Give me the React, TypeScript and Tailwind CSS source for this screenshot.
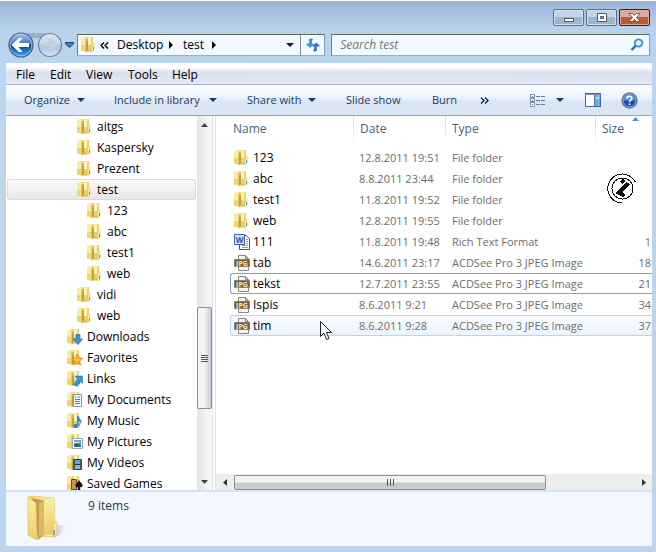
import React from "react";

type Badge = "down" | "star" | "link" | "doc" | "music" | "picture" | "video" | "games";

function FolderIcon({ badge }: { badge?: Badge }) {
  return (
    <svg width="16" height="16" viewBox="0 0 16 16" className="shrink-0" aria-hidden="true">
      <path d="M0 1L5 0H12V14H5L0 14Z" fill="#f3dc80" />
      <path d="M0 1H4.500V14.500L0 13.500Z" fill="#f9eb9f" />
      <path d="M0 8H4.500V14.500L0 13.500Z" fill="#f0d46c" />
      <path d="M4.500 2H7V13L5 15.500L4.500 15Z" fill="#d5b14e" />
      <path d="M5.500 5H6.500V13.500L5.500 14.500Z" fill="#b58a35" />
      <path d="M7 .5H10V13H7Z" fill="#fdf4bb" />
      <path d="M10 .5H12V14H10Z" fill="#efd26b" />
      <path d="M7 8H12V13H7Z" fill="#efcf63" />
      <path d="M6 13H12V14.500H6Z" fill="#d9b64c" />
      <path d="M11 5.500L13 6.500V13L11.500 14.500L10.500 13.500Z" fill="#f8e9a0" stroke="#e0c15c" strokeWidth=".5" />
      <path d="M12 10H13V13H12Z" fill="#3f9be3" />
      {badge === "down" && <path d="M9 5.500H13V10H15.500L11 15.500L6.500 10H9Z" fill="#2f95e8" stroke="#1c65b8" strokeWidth=".6" />}
      {badge === "star" && <path d="M10 4L11.500 8L15.500 8.500L12.500 11L13.500 15L10 12.500L6.500 15L7.500 11L5 8.500L8.600 8Z" fill="#fdc036" stroke="#e07c18" strokeWidth=".8" />}
      {badge === "link" && <path d="M8 5H15.500V12.500L13 10.500L10 15.500L6.500 13.500L10.500 8.500Z" fill="#2d96e4" stroke="#1a66b0" strokeWidth=".5" />}
      {badge === "doc" && (
        <g><path d="M6.500 2.500H14.500V14.500H6.500Z" fill="#f4f9fd" stroke="#8098ae" /><path d="M8 5H9.500M8 7.500H13M8 9.500H13M8 11.500H13M11 5H13" stroke="#3f82bd" /></g>
      )}
      {badge === "music" && (
        <g fill="#2b8cdc"><ellipse cx="8.700" cy="13" rx="2.600" ry="2.200" /><path d="M10 3H12C12 6 15.500 6.500 14 11.500C13.500 9 12.500 8.500 11.500 8.500V13H10Z" /></g>
      )}
      {badge === "picture" && (
        <g><path d="M5.500 4.500H15.500V14.500H5.500Z" fill="#fff" stroke="#9aa8b8" /><path d="M7 6H14V13H7Z" fill="#58aee6" /><path d="M7 10L10 9L14 11V13H7Z" fill="#3b6870" /><path d="M7 8H12V9H7Z" fill="#e9f5fb" /></g>
      )}
      {badge === "video" && (
        <g><path d="M6 4H15V15H6Z" fill="#27313f" /><path d="M8 5H13V9H8Z" fill="#58a5dd" /><path d="M8 10H13V14H8Z" fill="#7fb5de" /><path d="M7 4.500V15M14 4.500V15" stroke="#dce5ee" strokeWidth=".8" strokeDasharray="1 1" /></g>
      )}
      {badge === "games" && (
        <g><path d="M4.500 3.500H9.500V13.500H4.500Z" fill="#c9965a" stroke="#6f4b25" /><path d="M12 3.500C12.500 6 16 7.500 15.500 10C15 11.500 13.500 11.500 12.700 11L13.500 14H10.500L11.300 11C10 12 8.500 11 8.500 9.500C8.500 7.500 11.500 6 12 3.500Z" fill="#14120f" /></g>
      )}
    </svg>
  );
}

function LargeFolder() {
  return (
    <svg width="42" height="48" viewBox="0 0 42 48" aria-hidden="true">
      <defs>
        <linearGradient id="bf" x1="0" y1="0" x2="1" y2="0"><stop offset="0" stopColor="#f0d36c" /><stop offset="1" stopColor="#fdf0ae" /></linearGradient>
        <linearGradient id="ff" x1="0" y1="0" x2="0" y2="1"><stop offset="0" stopColor="#fbeea8" /><stop offset="1" stopColor="#eecb62" /></linearGradient>
        <linearGradient id="sh" x1="0" y1="0" x2="1" y2="0"><stop offset="0" stopColor="#aeb7c4" /><stop offset="1" stopColor="#f6f8fe" /></linearGradient>
      </defs>
      <path d="M24 42L32 30L41 31L38 37L30 42Z" fill="url(#sh)" />
      <path d="M2 2L6 1L28 3L29 26L31 30L29 42L13 41Z" fill="url(#bf)" stroke="#dfbe58" strokeWidth=".6" />
      <path d="M6 3L19 6V39L12 45Z" fill="#c39b4f" />
      <path d="M13 8L19 6V39L13 42Z" fill="#dcb966" />
      <path d="M18 5L28 3V39L18 40Z" fill="url(#ff)" />
      <path d="M2 2L10 8L11 45L2 40Z" fill="url(#ff)" stroke="#dfba4e" strokeWidth=".6" />
      <path d="M27 28L31 27V39L28 42L26 39Z" fill="#f8e69a" stroke="#ddbd57" strokeWidth=".7" />
      <path d="M28 35V40" stroke="#4b9ee1" strokeWidth="1.600" />
    </svg>
  );
}

function WordIcon() {
  return (
    <svg width="16" height="16" viewBox="0 0 16 16" className="shrink-0" aria-hidden="true">
      <path d="M5.500 1.500H12L15.500 4.500V15.500H5.500Z" fill="#fdfefe" stroke="#36578f" />
      <path d="M12 5.500H14M12 7.500H14M12 9.500H14M8 11.500H14M8 13.500H14" stroke="#7fa0d2" />
      <path d="M.5 .5H10.500V10.500H.5Z" fill="#dbe7f8" stroke="#3561ad" />
      <text x="5.500" y="8.500" textAnchor="middle" fontSize="8" fontWeight="700" fill="#2450a0">W</text>
    </svg>
  );
}

function JpegIcon() {
  return (
    <svg width="16" height="16" viewBox="0 0 16 16" className="shrink-0" aria-hidden="true">
      <path d="M4.500 .5H11.500L14.500 3.500V15.500H4.500Z" fill="#f4f4f4" stroke="#8a8789" />
      <path d="M11.500 .5V3.500H14.500" fill="none" stroke="#8a8789" />
      <path d="M.5 4.500H15.500V11.500H.5Z" fill="#77602c" stroke="#8c8175" />
      <text x="8" y="10.500" textAnchor="middle" fontSize="7" fontWeight="700" fill="#f4e8c2">JPG</text>
    </svg>
  );
}

function Caret({ className = "" }: { className?: string }) {
  return (
    <svg width="8" height="4" viewBox="0 0 8 4" className={"shrink-0 " + className} aria-hidden="true">
      <path d="M0 0H8L4 4Z" fill="currentColor" />
    </svg>
  );
}

function Crumb() {
  return (
    <svg width="4" height="8" viewBox="0 0 4 8" className="shrink-0" aria-hidden="true"><path d="M0 0L4 4L0 8Z" fill="#000" /></svg>
  );
}

function BackForward() {
  return (
    <div className="flex items-center">
      <button aria-label="Back" className="h-[26px] w-7">
        <svg width="28" height="26" viewBox="0 0 28 26">
          <defs><linearGradient id="bk" x1="0" y1="0" x2="0" y2="1"><stop offset="0" stopColor="#a9c9ee" /><stop offset=".45" stopColor="#4379c3" /><stop offset=".5" stopColor="#0c3b91" /><stop offset="1" stopColor="#3fb0ee" /></linearGradient></defs>
          <path d="M14 1H28V6H20Z" fill="#9aafca" />
          <circle cx="14" cy="13" r="12" fill="url(#bk)" stroke="#49648f" strokeWidth="1.200" />
          <circle cx="14" cy="13" r="10.800" fill="none" stroke="#a8c7ea" strokeWidth=".8" />
          <path d="M4.500 13L12 6H15.500L11.500 11H22V15H11.500L15.500 20H12Z" fill="#fff" />
        </svg>
      </button>
      <button aria-label="Forward" className="h-[26px] w-7">
        <svg width="28" height="26" viewBox="0 0 28 26">
          <defs><linearGradient id="fw" x1="0" y1="0" x2="0" y2="1"><stop offset="0" stopColor="#dbe4f0" /><stop offset=".48" stopColor="#c9d6e7" /><stop offset=".5" stopColor="#acc0d9" /><stop offset="1" stopColor="#d4e3f3" /></linearGradient></defs>
          <path d="M0 1H12L8 6H0Z" fill="#9aafca" />
          <circle cx="15" cy="13" r="11.500" fill="url(#fw)" stroke="#71839f" strokeWidth="1.200" />
          <path d="M8 11.500H16L13 7.500H16L22.500 13L16 18.500H13L16 14.500H8Z" fill="#c5d2e2" stroke="#b3c3d8" strokeWidth=".5" />
        </svg>
      </button>
      <button aria-label="Recent pages" className="ml-[2px] flex h-6 w-3 items-center">
        <svg width="9" height="6" viewBox="0 0 9 6"><path d="M.5 .5H8.500V2L4.500 5.500L.5 2Z" fill="#3c85c2" stroke="#1b426f" /></svg>
      </button>
    </div>
  );
}

const tree: { name: string; level: 0 | 1 | 2; badge?: Badge; selected?: boolean }[] = [
  { name: "aitgs", level: 1 },
  { name: "Kaspersky", level: 1 },
  { name: "Prezent", level: 1 },
  { name: "test", level: 1, selected: true },
  { name: "123", level: 2 },
  { name: "abc", level: 2 },
  { name: "test1", level: 2 },
  { name: "web", level: 2 },
  { name: "vidi", level: 1 },
  { name: "web", level: 1 },
  { name: "Downloads", level: 0, badge: "down" },
  { name: "Favorites", level: 0, badge: "star" },
  { name: "Links", level: 0, badge: "link" },
  { name: "My Documents", level: 0, badge: "doc" },
  { name: "My Music", level: 0, badge: "music" },
  { name: "My Pictures", level: 0, badge: "picture" },
  { name: "My Videos", level: 0, badge: "video" },
  { name: "Saved Games", level: 0, badge: "games" },
];

const indent = { 0: "pl-[59px]", 1: "pl-[69px]", 2: "pl-[79px]" };

type FileRow = { name: string; date: string; kind: "folder" | "word" | "jpeg"; size?: string; state?: "focus" | "hover" };

const files: FileRow[] = [
  { name: "123", date: "12.8.2011 19:51", kind: "folder" },
  { name: "abc", date: "8.8.2011 23:44", kind: "folder" },
  { name: "test1", date: "11.8.2011 19:52", kind: "folder" },
  { name: "web", date: "12.8.2011 19:55", kind: "folder" },
  { name: "111", date: "11.8.2011 19:48", kind: "word", size: "1" },
  { name: "tab", date: "14.6.2011 23:17", kind: "jpeg", size: "18" },
  { name: "tekst", date: "12.7.2011 23:55", kind: "jpeg", size: "21", state: "focus" },
  { name: "Ispis", date: "8.6.2011 9:21", kind: "jpeg", size: "34" },
  { name: "tim", date: "8.6.2011 9:28", kind: "jpeg", size: "37", state: "hover" },
];

const typeLabel = { folder: "File folder", word: "Rich Text Format", jpeg: "ACDSee Pro 3 JPEG Image" };

function TitleBar() {
  const frame = "flex h-[17px] w-[31px] items-center justify-center rounded-[2px] border";
  return (
    <div className="flex h-8 shrink-0 justify-end gap-[2px] pt-2 pr-[6px]">
      <button aria-label="Minimize" className={frame + " border-[#5b6f8a] bg-linear-to-b from-[#c3d4e8] from-50% to-[#9fb4cf] to-50% shadow-[inset_0_0_0_1px_#d3e0ef]"}>
        <svg width="12" height="11" viewBox="0 0 12 11"><path d="M1.500 6.500H10.500V9.500H1.500Z" fill="#fff" stroke="#535766" /></svg>
      </button>
      <button aria-label="Maximize" className={frame + " border-[#5b6f8a] bg-linear-to-b from-[#c3d4e8] from-50% to-[#9fb4cf] to-50% shadow-[inset_0_0_0_1px_#d3e0ef]"}>
        <svg width="12" height="11" viewBox="0 0 12 11"><path d="M1.500 1.500H10.500V9.500H1.500Z" fill="#fff" stroke="#535766" /><path d="M4.500 4.500H7.500V6.500H4.500Z" fill="#9fb4cf" stroke="#535766" /></svg>
      </button>
      <button aria-label="Close" className={frame + " border-[#4b1a22] bg-linear-to-b from-[#dda79b] from-50% to-[#b95a34] to-50% shadow-[inset_0_0_0_1px_#dfa890]"}>
        <svg width="13" height="11" viewBox="0 0 13 11"><path d="M1 1.500H4.500L6.500 3.500L8.500 1.500H12L8.500 5.500L12 9.500H8.500L6.500 7.500L4.500 9.500H1L4.500 5.500Z" fill="#fff" stroke="#555060" strokeWidth=".9" /></svg>
      </button>
    </div>
  );
}

function AddressRow() {
  const box = "flex h-[22px] items-center border border-t-[#5e6c5e] border-r-[#8d9aa8] border-b-[#9eaebf] border-l-[#707f8c] bg-[#f1f8fe]";
  return (
    <div className="flex h-[30px] shrink-0 items-start pt-[1px] pr-[6px] pl-[7px]">
      <div className="-mt-[2px] w-[70px] shrink-0"><BackForward /></div>
      <nav aria-label="Address" className={box + " flex-[248_1_0]"}>
        <span className="ml-[3px] flex"><FolderIcon /></span>
        <button aria-label="Previous locations" className="ml-[3px] w-[9px]">
          <svg width="9" height="7" viewBox="0 0 9 7" className="block"><path d="M4 .5L1 3.500L4 6.500M8 .5L5 3.500L8 6.500" fill="none" stroke="#000" strokeWidth="1.400" /></svg>
        </button>
        <a href="#desktop" className="w-[60px] pl-2 whitespace-nowrap">Desktop</a>
        <Crumb />
        <a href="#test" className="w-[39px] pl-[10px]">test</a>
        <Crumb />
        <button aria-label="Address history" className="ml-auto flex h-full w-5 items-center justify-center text-[#10104a]"><Caret /></button>
        <button aria-label="Refresh" className="flex h-full w-6 items-center justify-center border-l border-[#7d8994]">
          <svg width="14" height="14" viewBox="0 0 14 14"><path d="M6.500 1H4.500C3 1 3.500 2 3.500 6H.5L4 9.500L7.500 6H5.500V3Z" fill="#3b99dc" stroke="#276eb5" strokeWidth=".6" /><path d="M7.500 13H9.500C11 13 10.500 12 10.500 8H13.500L10.500 5L6.500 8H8.500V11Z" fill="#3475c4" stroke="#26569b" strokeWidth=".6" /></svg>
        </button>
      </nav>
      <label className={box + " ml-[6px] flex-[319_1_0]"}>
        <input type="search" aria-label="Search test" placeholder="Search test" className="min-w-0 flex-1 bg-transparent pl-2 italic outline-none placeholder:text-[#70777d]" />
        <svg width="14" height="14" viewBox="0 0 14 14" className="mr-[5px]" aria-hidden="true"><circle cx="8.500" cy="5" r="3.700" fill="#e5f3fd" stroke="#3a8cce" strokeWidth="1.800" /><path d="M5.500 8L1.500 12" stroke="#2d66ac" strokeWidth="2.400" /></svg>
      </label>
    </div>
  );
}

function Commands() {
  return (
    <div className="flex h-[31px] shrink-0 items-center border-b border-[#93a4c8] bg-linear-to-b from-[#fafdff] from-10% via-[#e9f1fb] via-45% to-[#dbe6f5] to-55% pl-[18px] text-[11px] text-[#1e395b]">
      <button className="flex w-[90px] items-center whitespace-nowrap"><span className="w-[53px] text-left">Organize</span><Caret /></button>
      <button className="flex w-[133px] items-center whitespace-nowrap"><span className="w-[95px] text-left">Include in library</span><Caret /></button>
      <button className="flex w-[99px] items-center whitespace-nowrap"><span className="w-[61px] text-left">Share with</span><Caret /></button>
      <button className="w-[86px] text-left whitespace-nowrap">Slide show</button>
      <button className="w-12 text-left">Burn</button>
      <button aria-label="More commands">
        <svg width="9" height="7" viewBox="0 0 9 7"><path d="M1 .5L4 3.500L1 6.500M5 .5L8 3.500L5 6.500" fill="none" stroke="#14284a" strokeWidth="1.400" /></svg>
      </button>
      <div className="ml-auto flex items-center pr-[14px]">
        <button aria-label="Change view" className="w-[26px]">
          <svg width="16" height="13" viewBox="0 0 16 13" shapeRendering="crispEdges"><path d="M.5 .5H4.500V3.500H.5ZM.5 4.500H4.500V7.500H.5ZM.5 8.500H4.500V12.500H.5Z" fill="#fff" stroke="#8492ad" /><path d="M2 2H3V3H2ZM2 10H3V11H2Z" fill="#4b77ad" /><path d="M2 6H3V7H2Z" fill="#c14c32" /><path d="M6 2.500H10M11 2.500H15M6 6.500H10M11 6.500H15M6 10.500H10M11 10.500H15" stroke="#6c7a92" /></svg>
        </button>
        <button aria-label="More views" className="flex h-5 w-[29px] items-center"><Caret /></button>
        <button aria-label="Show the preview pane" className="w-9">
          <svg width="16" height="14" viewBox="0 0 16 14" shapeRendering="crispEdges"><path d="M.5 .5H15.500V13.500H.5Z" fill="#fff" stroke="#4b6587" /><path d="M0 1.500H16" stroke="#7893b7" /><path d="M10 2H15V13H10Z" fill="#62b4df" /><path d="M9.500 2V13" stroke="#567ba2" /><path d="M11 4H14V6H11Z" fill="#bae3f5" /></svg>
        </button>
        <button aria-label="Help">
          <svg width="17" height="17" viewBox="0 0 17 17" className="block"><circle cx="8.500" cy="8.500" r="7.600" fill="#1d4cae" stroke="#737f93" strokeWidth="1.300" /><path d="M2.500 8.500A6 6 0 0 1 14.500 8.500Z" fill="#4d8bdb" /><circle cx="8.500" cy="8.500" r="6.300" fill="none" stroke="#afc9ed" strokeWidth=".7" /><path d="M6 6.800C6 3.500 11.200 3.700 10.800 6.500C10.500 8 8.500 8 8.500 10M8.500 11.500V13" fill="none" stroke="#fff" strokeWidth="1.700" /></svg>
        </button>
      </div>
    </div>
  );
}

function Sidebar() {
  return (
    <aside className="flex w-[206px] shrink-0">
      <ul className="min-w-0 flex-1 overflow-hidden pl-[1px]">
        {tree.map((item, i) => (
          <li key={i}>
            <a href="#folder" className={"mr-[1px] flex h-[21px] items-center gap-1 rounded-[3px] border whitespace-nowrap " + indent[item.level] + (item.selected ? " border-[#d9d9d9] bg-linear-to-b from-[#fafbfb] to-[#e6e6e6]" : " border-transparent")}>
              <FolderIcon badge={item.badge} />
              {item.name}
            </a>
          </li>
        ))}
      </ul>
      <div className="flex w-[15px] flex-col items-center bg-linear-to-r from-[#e5e5e7] via-[#f0f0f0] to-[#fafafa]">
        <button aria-label="Scroll up" className="flex h-[17px] w-full items-center justify-center"><svg width="7" height="4" viewBox="0 0 7 4"><path d="M0 4L3.500 0L7 4Z" fill="#3c4148" /></svg></button>
        <div className="flex-[175_1_0]" />
        <div className="flex w-full flex-[101_1_0] flex-col items-center justify-center gap-[1px] rounded-[2px] border border-[#8c8f94] bg-linear-to-r from-[#f5f5f5] from-45% to-[#c9ccd1]">
          {[0, 1, 2, 3].map((n) => <span key={n} className="h-[1px] w-[7px] bg-[#55585d]" />)}
        </div>
        <div className="flex-[64_1_0]" />
        <button aria-label="Scroll down" className="flex h-[17px] w-full items-center justify-center"><svg width="7" height="4" viewBox="0 0 7 4"><path d="M0 0L3.500 4L7 0Z" fill="#3c4148" /></svg></button>
      </div>
    </aside>
  );
}

function FileList() {
  const rowBorder = { none: "border-transparent", focus: "border-[#7da2ce]", hover: "border-[#b8d6fb]" };
  const head = "flex h-[26px] items-center";
  const rule = "border-l pl-[6px] [border-image:linear-gradient(#d5e3f3_50%,transparent)_1]";
  return (
    <main className="flex min-w-0 flex-1 flex-col">
      <div className="flex-1 overflow-hidden pl-[14px]">
        <table className="w-full table-fixed border-separate border-spacing-0 text-left">
          <colgroup><col className="w-[123px]" /><col className="w-[92px]" /><col className="w-[150px]" /><col /></colgroup>
          <thead className="text-[#4c607a]">
            <tr className="h-[31px] align-top">
              <th className="p-0 font-normal"><span className={head + " pl-[3px]"}>Name</span></th>
              <th className="p-0 font-normal"><span className={head + " " + rule}>Date</span></th>
              <th className="p-0 font-normal"><span className={head + " " + rule}>Type</span></th>
              <th className="p-0 font-normal">
                <span className={head + " relative " + rule}>Size<svg width="7" height="4" viewBox="0 0 7 4" className="absolute top-[1px] left-9"><path d="M0 4L3.500 0L7 4Z" fill="#5d8fb3" /></svg></span>
              </th>
            </tr>
          </thead>
          <tbody className="text-[#6d6d6d]">
            {files.map((f) => {
              const cell = "h-[21px] border-y p-0 whitespace-nowrap leading-4 " + rowBorder[f.state ?? "none"] + (f.state === "hover" ? " bg-linear-to-b from-[#fafcfe] to-[#ebf4fd]" : "");
              return (
                <tr key={f.name}>
                  <td className={cell + " rounded-l-[3px] border-l"}>
                    <span className="flex items-center gap-[3px] pl-[3px] text-black">
                      {f.kind === "folder" ? <FolderIcon /> : f.kind === "word" ? <WordIcon /> : <JpegIcon />}
                      {f.name}
                    </span>
                  </td>
                  <td className={cell + " pl-[6px] text-[11px]"}>{f.date}</td>
                  <td className={cell + " pl-[7px] text-[11px]"}>{typeLabel[f.kind]}</td>
                  <td className={cell + " pr-[1px] text-right text-[11px]"}>{f.size}</td>
                </tr>
              );
            })}
          </tbody>
        </table>
      </div>
      <div className="flex h-4 shrink-0 items-center bg-[#ededed]">
        <button aria-label="Scroll left" className="flex h-full w-[18px] items-center justify-center"><svg width="4" height="7" viewBox="0 0 4 7"><path d="M4 0V7L0 3.500Z" fill="#30343a" /></svg></button>
        <div className="flex h-[15px] flex-[312_1_0] items-center justify-center gap-[2px] rounded-[2px] border border-[#8b908d] bg-linear-to-b from-[#f4f4f4] from-45% to-[#c9cccd] to-55%">
          {[0, 1, 2].map((n) => <span key={n} className="h-[7px] w-[1px] bg-[#55585d]" />)}
        </div>
        <div className="flex-[89_1_0]" />
        <button aria-label="Scroll right" className="flex h-full w-[17px] items-center justify-center"><svg width="4" height="7" viewBox="0 0 4 7"><path d="M0 0V7L4 3.500Z" fill="#30343a" /></svg></button>
      </div>
    </main>
  );
}

export default function App() {
  return (
    <div className="relative flex h-screen flex-col overflow-hidden border-t border-white bg-[#bbd5ee] bg-linear-to-b from-[#9ab4d7] via-[#b8d1ed] via-[28px] to-[#bbd5ee] to-[60px] font-['Open_Sans','Noto_Sans',sans-serif] text-[12px] leading-4 text-black">
      <TitleBar />
      <AddressRow />
      <div className="mr-1 mb-[6px] ml-[6px] flex min-h-0 flex-1 flex-col bg-white">
        <ul className="flex h-[22px] shrink-0 items-center border-b border-[#a9b8d2] bg-linear-to-b from-white from-20% via-[#dae0f0] via-45% to-[#e3e9f6] pt-[2px] pl-[10px]">
          <li className="w-[34px]"><button>File</button></li>
          <li className="w-9"><button>Edit</button></li>
          <li className="w-[42px]"><button>View</button></li>
          <li className="w-11"><button>Tools</button></li>
          <li><button>Help</button></li>
        </ul>
        <Commands />
        <div className="flex min-h-0 flex-1">
          <Sidebar />
          <div className="w-1 shrink-0 border-x border-[#e0e2f1]" />
          <FileList />
        </div>
        <footer className="flex h-14 shrink-0 items-start border-t-2 border-[#d6e3f3] bg-[#f5f7fe] pl-5 text-[#1e395b]">
          <div className="w-[62px] pt-[3px]"><LargeFolder /></div>
          <span className="pt-[6px]">9 items</span>
        </footer>
      </div>
      <svg width="31" height="31" viewBox="0 0 31 31" shapeRendering="crispEdges" className="pointer-events-none absolute top-[172px] left-[606px]" aria-hidden="true">
        <path d="M29.500 9.500A14.500 14.500 0 1 0 15.500 30" fill="none" stroke="#111" />
        <circle cx="16.500" cy="15.500" r="10.500" fill="none" stroke="#111" />
        <path d="M14 8L17 6L19 8L16 11ZM20 9L24 11L16 19L19 22L17 24L9 20Z" fill="#111" />
        <path d="M14 22L17 20L19 22L17 25Z" fill="#111" />
      </svg>
      <svg width="12" height="19" viewBox="0 0 12 19" className="pointer-events-none absolute top-[320px] left-[320px]" aria-hidden="true">
        <path d="M.5 .5V15.500L4 12L6.500 18.500L9 17.500L6.500 11.500H11.500Z" fill="#fff" stroke="#1d2230" />
      </svg>
    </div>
  );
}
